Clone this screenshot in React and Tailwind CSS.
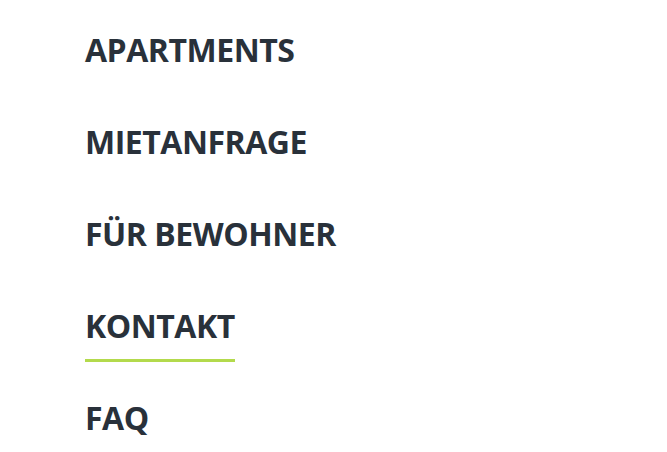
import React from 'react'

const items = [
  { label: 'APARTMENTS' },
  { label: 'MIETANFRAGE' },
  { label: 'FÜR BEWOHNER' },
  { label: 'KONTAKT', active: true },
  { label: 'FAQ' },
]

export default function App() {
  return (
    <div className="min-h-screen w-full bg-white pl-[85px] pt-[28px]" style={{ fontFamily: '"Open Sans", sans-serif' }}>
      <nav className="flex flex-col gap-[48px]">
        {items.map((item) => (
          <a
            key={item.label}
            href="#"
            className="relative block w-fit text-[32px] leading-[44px] font-bold text-[#29313a] tracking-[-0.015em]"
          >
            {item.label}
            {item.active && (
              <span className="absolute left-0 right-0 -bottom-[14px] h-[3px] bg-[#b3da4c]" />
            )}
          </a>
        ))}
      </nav>
    </div>
  )
}
